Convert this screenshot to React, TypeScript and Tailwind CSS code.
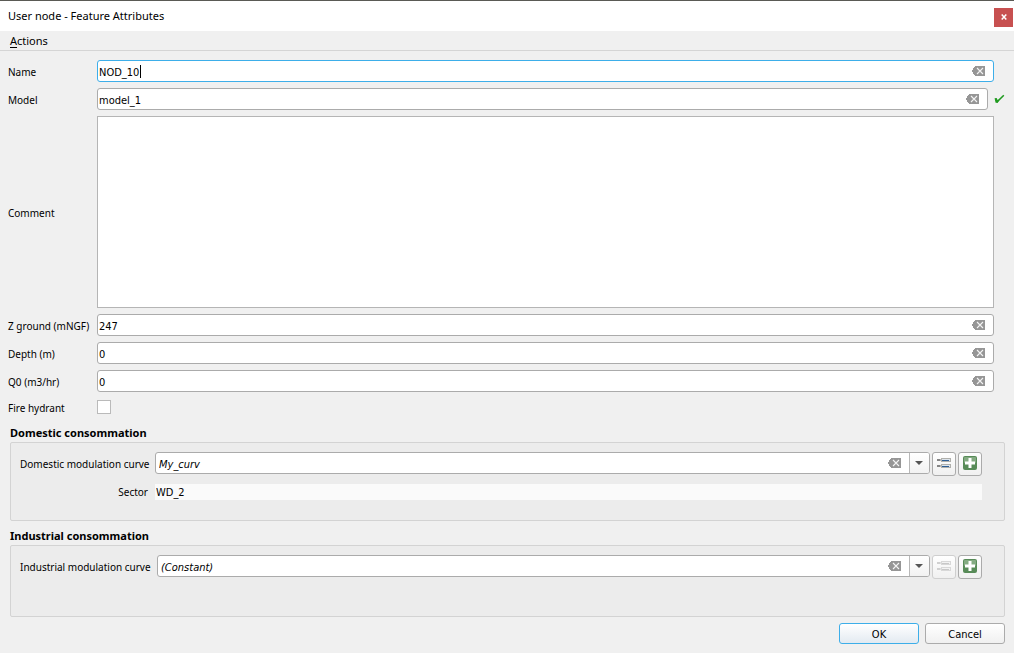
import React from "react";

const fieldBox =
  "flex h-[22px] min-w-0 flex-1 items-center rounded-[3px] border bg-white";
const fieldInput =
  "h-full min-w-0 flex-1 bg-transparent pt-0.5 font-['DejaVu_Sans_Condensed','Noto_Sans',sans-serif] text-[11px] text-black outline-none";
const fieldLabel = "w-[89px] shrink-0 pt-0.5 whitespace-nowrap";

function ClearButton({ label }: { label: string }) {
  return (
    <button type="button" aria-label={`Clear ${label}`} className="mr-2 shrink-0">
      <svg width="13" height="10" viewBox="0 0 13 10" className="block">
        <path d="M3 0H13V10H3V9H2V8H1V6H0V4H1V2H2V1H3Z" fill="#969696" />
        <path d="M5 2L11 8M11 2L5 8" stroke="#f4f4f4" strokeWidth="1.1" fill="none" />
      </svg>
    </button>
  );
}

type FieldProps = {
  id: string;
  label: string;
  value: string;
  focused?: boolean;
  valid?: boolean;
};

function Field({ id, label, value, focused, valid }: FieldProps) {
  return (
    <div className="flex items-center">
      <label htmlFor={id} className={fieldLabel}>
        {label}
      </label>
      <div className={`relative ${fieldBox} ${focused ? "border-[#3daee9]" : "border-[#ababab]"}`}>
        <input id={id} defaultValue={value} className={`${fieldInput} pl-px`} />
        {focused && <span className="absolute top-1 left-[42px] h-[13px] w-px bg-black" />}
        <ClearButton label={label} />
      </div>
      {valid ? (
        <svg width="11" height="10" viewBox="0 0 11 10" className="ml-1.5 shrink-0">
          <path d="M1.5 5L3.2 7.8L9.8 1.2" fill="none" stroke="#1f9a1f" strokeWidth="1.5" />
          <path d="M0.6 4.2L2.6 4L3.8 6.2L6 4.4L3.8 8.8H1.6Z" fill="#1f9a1f" />
        </svg>
      ) : (
        <span className="w-[11px] shrink-0" />
      )}
    </div>
  );
}

function FormIcon({ muted }: { muted?: boolean }) {
  return (
    <svg width="14" height="10" viewBox="0 0 14 10">
      {[0, 6].map((y) => (
        <g key={y}>
          <rect x="0" y={y + 1} width="3" height="2" fill={muted ? "#d0d0d0" : "#858585"} />
          <rect x="3" y={y + 1} width="1" height="2" fill={muted ? "#e0e0e0" : "#b5b5b5"} />
          <rect
            x="4.5"
            y={y + 0.5}
            width="9"
            height="3"
            fill={muted ? "#f2f2f2" : "#dce4ec"}
            stroke={muted ? "#d8d8d8" : "#b0b0ac"}
          />
          <rect x="5" y={y + 2} width="7" height="1" fill={muted ? "#c8c8c8" : "#2f5f95"} />
        </g>
      ))}
    </svg>
  );
}

function AddIcon() {
  return (
    <svg width="14" height="14" viewBox="0 0 14 14">
      <rect width="14" height="14" rx="2" fill="#588b58" />
      <rect x="1" y="1" width="12" height="6" rx="1" fill="#84ab82" />
      <path d="M5.5 2H8.5V5.5H12V8.5H8.5V12H5.5V8.5H2V5.5H5.5Z" fill="#fff" />
    </svg>
  );
}

const toolButton =
  "flex h-6 w-6 shrink-0 items-center justify-center rounded-[3px] border bg-linear-to-b from-white to-[#f0f0f0] pb-0.5";

type CurveProps = {
  id: string;
  label: string;
  value: string;
  labelWidth: string;
  disabled?: boolean;
};

function CurveRow({ id, label, value, labelWidth, disabled }: CurveProps) {
  return (
    <div className="flex items-start">
      <label htmlFor={id} className={`shrink-0 self-center whitespace-nowrap ${labelWidth}`}>
        {label}
      </label>
      <div className={`${fieldBox} ml-[7px] border-[#ababab]`}>
        <input id={id} defaultValue={value} className={`${fieldInput} pl-[3px] italic`} />
        <ClearButton label={label} />
        <button
          type="button"
          aria-label={`Choose ${label}`}
          className="flex h-full w-5 items-center justify-center rounded-r-[2px] border-l border-[#b8b8b8] bg-linear-to-b from-white to-[#f2f2f2] pr-px"
        >
          <svg width="8" height="4" viewBox="0 0 8 4">
            <path d="M0 0H8L4 4Z" fill="#555" />
          </svg>
        </button>
      </div>
      <button
        type="button"
        aria-label="Open related form"
        disabled={disabled}
        className={`${toolButton} ml-0.5 ${disabled ? "border-[#cfcfcf]" : "border-[#ababab]"}`}
      >
        <FormIcon muted={disabled} />
      </button>
      <button
        type="button"
        aria-label="Add new entry"
        className={`${toolButton} ml-0.5 border-[#ababab]`}
      >
        <AddIcon />
      </button>
    </div>
  );
}

const groupBox = "rounded-[2px] border border-[#d3d3d3] bg-[#ececec] pt-[9px] pr-[22px] pl-[9px]";
const groupTitle = "flex h-[18px] items-center text-[11px] font-bold";
const dialogButton =
  "h-[21px] w-20 rounded-[3px] border bg-linear-to-b from-white pt-px font-['DejaVu_Sans_Condensed','Noto_Sans',sans-serif] text-[11px] leading-none";

export default function App() {
  return (
    <div className="flex min-h-screen flex-col bg-[#f0f0f0] font-['Noto_Sans','Liberation_Sans',sans-serif] text-[10px] leading-4 text-black">
      <header className="flex h-[31px] items-center justify-between border-t border-[#5a5a55] bg-white pr-px pl-2">
        <h1 className="text-[11px] font-normal">User node - Feature Attributes</h1>
        <button
          type="button"
          aria-label="Close"
          className="mt-0.5 flex h-[19px] w-[19px] items-center justify-center bg-[#c75050]"
        >
          <svg width="6" height="6" viewBox="0 0 6 6">
            <path d="M0.7 0.5L5.3 5.5M5.3 0.5L0.7 5.5" stroke="#fff" strokeWidth="1.5" />
          </svg>
        </button>
      </header>
      <nav className="flex h-5 items-center border-b border-[#d5d5d5] px-2.5 text-[11px]">
        <button type="button">
          <span className="underline underline-offset-2">A</span>ctions
        </button>
      </nav>

      <form className="pt-[9px] pr-[9px] pl-2" onSubmit={(e) => e.preventDefault()}>
        <div className="flex flex-col gap-1.5">
          <Field id="name" label="Name" value="NOD_10" focused />
          <Field id="model" label="Model" value="model_1" valid />
          <div className="flex items-center pr-[11px]">
            <label htmlFor="comment" className={fieldLabel}>
              Comment
            </label>
            <textarea
              id="comment"
              className="block h-48 min-w-0 flex-1 resize-none border border-[#b5b5b5] bg-white outline-none"
            />
          </div>
          <Field id="ground" label="Z ground (mNGF)" value="247" />
          <Field id="depth" label="Depth (m)" value="0" />
          <Field id="q0" label="Q0 (m3/hr)" value="0" />
          <div className="flex h-[22px] items-start">
            <label htmlFor="hydrant" className={fieldLabel}>
              Fire hydrant
            </label>
            <input
              id="hydrant"
              type="checkbox"
              className="mt-0.5 h-3.5 w-3.5 appearance-none border border-[#bababa] bg-white"
            />
          </div>
        </div>

        <section className="mt-1 ml-0.5">
          <h2 className={groupTitle}>Domestic consommation</h2>
          <div className={`${groupBox} h-[79px]`}>
            <CurveRow
              id="domestic"
              label="Domestic modulation curve"
              value="My_curv"
              labelWidth="w-32"
            />
            <div className="mt-2 flex items-center">
              <label htmlFor="sector" className="w-32 shrink-0 text-right">
                Sector
              </label>
              <input
                id="sector"
                readOnly
                defaultValue="WD_2"
                className="ml-[7px] h-4 min-w-0 flex-1 bg-[#fafafa] pt-0.5 pl-px font-['DejaVu_Sans_Condensed','Noto_Sans',sans-serif] text-[11px] outline-none"
              />
            </div>
          </div>
        </section>

        <section className="mt-1.5 ml-0.5">
          <h2 className={groupTitle}>Industrial consommation</h2>
          <div className={`${groupBox} h-[72px]`}>
            <CurveRow
              id="industrial"
              label="Industrial modulation curve"
              value="(Constant)"
              labelWidth="w-[130px]"
              disabled
            />
          </div>
        </section>

        <footer className="mt-1.5 flex justify-end gap-1.5">
          <button type="submit" className={`${dialogButton} border-[#3daee9] to-[#e3eaf1]`}>
            OK
          </button>
          <button type="button" className={`${dialogButton} border-[#ababab] to-[#f0f0f0]`}>
            Cancel
          </button>
        </footer>
      </form>
    </div>
  );
}
